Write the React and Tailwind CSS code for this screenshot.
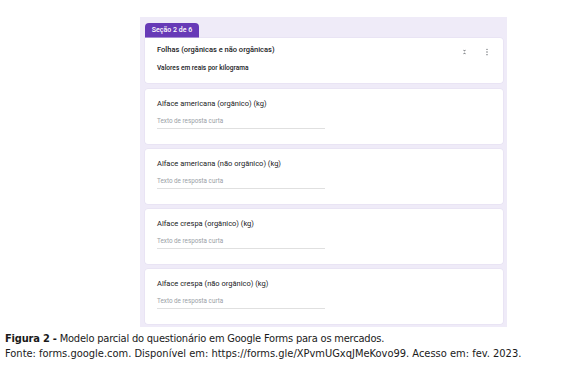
function Question({ title }) {
  return (
    <div className="h-[55px] rounded-[3px] bg-white pl-[12px] pt-[9px] shadow-[0_0_0_0.5px_#e3def0]">
      <p className="text-[7.5px] leading-[12px] text-[#202124]">{title}</p>
      <div className="mt-[7px] w-[168px] border-b border-[#e0e0e0] pb-[3px] text-[6.3px] leading-[8px] text-[#9aa0a6]">
        Texto de resposta curta
      </div>
    </div>
  )
}

function App() {
  return (
    <div className="h-[378px] w-[576px] bg-white" style={{ fontFamily: 'Roboto, "Noto Sans", sans-serif' }}>
      <div className="pl-[140px] pt-[17px]">
        <div className="h-[310px] w-[367px] bg-[#efebf8] pl-[5px] pr-[4px] pt-[6px]">
          <div className="flex h-[15px] w-[54px] items-center justify-center rounded-t-[4px] bg-[#673ab7] text-[7px] font-medium text-white">
            Seção 2 de 6
          </div>
          <div className="flex h-[45px] rounded-b-[3px] rounded-tr-[3px] bg-white pl-[12px] pt-[6px] shadow-[0_0_0_0.5px_#e3def0]">
            <div className="flex-1">
              <p className="text-[7.5px] font-medium leading-[12px] text-[#202124]">
                Folhas (orgânicas e não orgânicas)
              </p>
              <p className="mt-[8px] text-[6.6px] font-medium leading-[9px] text-[#202124]">
                Valores em reais por kilograma
              </p>
            </div>
            <div className="flex gap-[17px] pr-[14px] pt-[4px]">
              <svg width="7" height="8" viewBox="0 0 24 24" fill="#5f6368">
                <path d="M7.41 18.59L8.83 20 12 16.83 15.17 20l1.41-1.41L12 14l-4.59 4.59zm9.18-13.18L15.17 4 12 7.17 8.83 4 7.41 5.41 12 10l4.59-4.59z" />
              </svg>
              <svg width="4" height="8" viewBox="0 0 6 24" fill="#5f6368">
                <circle cx="3" cy="4" r="2" />
                <circle cx="3" cy="12" r="2" />
                <circle cx="3" cy="20" r="2" />
              </svg>
            </div>
          </div>
          <div className="mt-[6px] flex flex-col gap-[5px]">
            <Question title="Alface americana (orgânico) (kg)" />
            <Question title="Alface americana (não orgânico) (kg)" />
            <Question title="Alface crespa (orgânico) (kg)" />
            <Question title="Alface crespa (não orgânico) (kg)" />
          </div>
        </div>
      </div>
      <div className="pl-[5px] pt-[4px] text-[11px] leading-[15px] text-[#1a1a1a]" style={{ fontFamily: '"DejaVu Sans Condensed", "Liberation Sans", sans-serif' }}>
        <p className="tracking-[-0.2px]"><span className="font-bold">Figura 2 -</span> Modelo parcial do questionário em Google Forms para os mercados.</p>
        <p>Fonte: forms.google.com. Disponível em: https://forms.gle/XPvmUGxqJMeKovo99. Acesso em: fev. 2023.</p>
      </div>
    </div>
  )
}

export default App
